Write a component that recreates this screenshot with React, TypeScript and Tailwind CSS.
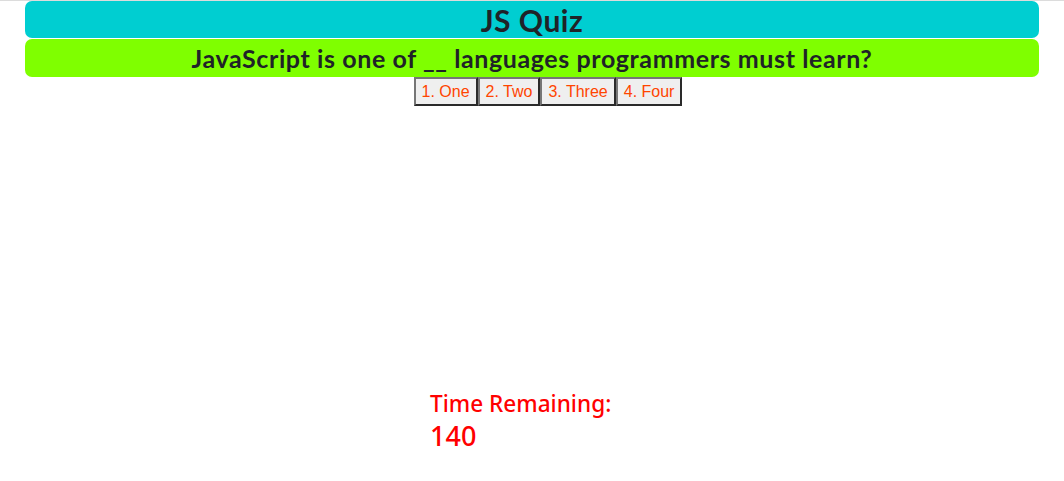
import React from "react";

export default function App() {
  const answers = ["1. One", "2. Two", "3. Three", "4. Four"];
  return (
    <div className="w-[1064px] h-[481px] bg-white border-t border-[#dcdcdc] overflow-hidden">
      <div className="mx-[25px]">
        <div className="h-[37px] bg-[#00ced1] rounded-[7px] flex items-center justify-center">
          <h1 className="text-[30px] font-bold text-[#1f2328] leading-none tracking-[0.5px]" style={{ fontFamily: "Lato, 'Open Sans', sans-serif" }}>JS Quiz</h1>
        </div>
        <div className="h-[38px] mt-[1px] bg-[#7fff00] rounded-[7px] flex items-center justify-center">
          <h2 className="text-[25px] font-bold text-[#1f2328] leading-none tracking-[0.6px]" style={{ fontFamily: "Lato, 'Open Sans', sans-serif" }}>JavaScript is one of __ languages programmers must learn?</h2>
        </div>
      </div>
      <div className="flex justify-center pl-[32px]">
        {answers.map((a) => (
          <button
            key={a}
            className="h-[29px] px-[6px] bg-[#efefef] text-[#ff4500] text-[16px] border-2 border-t-[#767676] border-l-[#767676] border-r-[#2a2a2a] border-b-[#2a2a2a]"
            style={{ fontFamily: "'Liberation Sans', Arial, sans-serif" }}
          >
            {a}
          </button>
        ))}
      </div>
      <div className="mt-[283px] pl-[430px] text-[#ff0000]" style={{ fontFamily: "'Noto Sans', 'Open Sans', sans-serif" }}>
        <div className="text-[22.6px] leading-[30px] font-medium">Time Remaining:</div>
        <div className="text-[27px] leading-[34px] font-medium">140</div>
      </div>
    </div>
  );
}
